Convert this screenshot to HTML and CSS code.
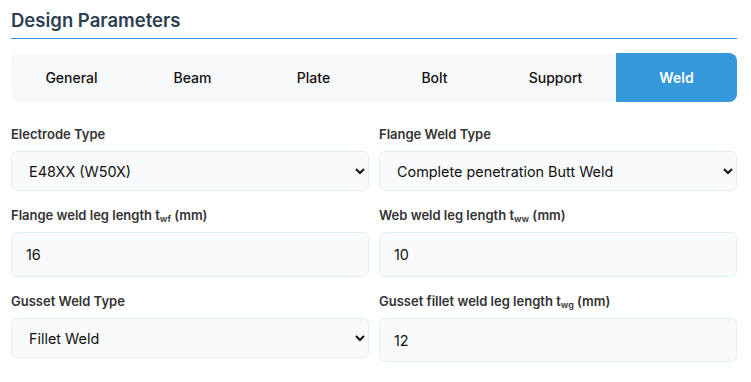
FILE: index.html
```html
<!DOCTYPE html>
<html lang="en">
<head>
    <meta charset="UTF-8">
    <meta name="viewport" content="width=device-width, initial-scale=1.0">
    <title>Design Parameters</title>
    <link rel="stylesheet" href="styles.css">
</head>
<body>
    <div class="container">
        <h2 class="section-title">Design Parameters</h2>

        <div class="tabs">
            <div class="tab">General</div>
            <div class="tab">Beam</div>
            <div class="tab">Plate</div>
            <div class="tab">Bolt</div>
            <div class="tab">Support</div>
            <div class="tab active">Weld</div>
        </div>

        <div class="form-grid">
            <div class="form-group">
                <label for="electrode">Electrode Type</label>
                <select id="electrode">
                    <option>E48XX (W50X)</option>
                    <option>E55XX (W55X)</option>
                </select>
            </div>
            <div class="form-group">
                <label for="flange-type">Flange Weld Type</label>
                <select id="flange-type">
                    <option>Complete penetration Butt Weld</option>
                    <option>Fillet Weld</option>
                </select>
            </div>
            <div class="form-group">
                <label for="twf">Flange weld leg length t<sub>wf</sub> (mm)</label>
                <input type="text" id="twf" value="16">
            </div>
            <div class="form-group">
                <label for="tww">Web weld leg length t<sub>ww</sub> (mm)</label>
                <input type="text" id="tww" value="10">
            </div>
            <div class="form-group">
                <label for="gusset-type">Gusset Weld Type</label>
                <select id="gusset-type">
                    <option>Fillet Weld</option>
                    <option>Complete penetration Butt Weld</option>
                </select>
            </div>
            <div class="form-group">
                <label for="twg">Gusset fillet weld leg length t<sub>wg</sub> (mm)</label>
                <input type="text" id="twg" value="12" class="tall">
            </div>
        </div>
    </div>
</body>
</html>
```

FILE: styles.css
```css
body {
    margin: 0;
    font-family: Inter, "Noto Sans", sans-serif;
    background: #fff;
    color: #111;
}
.container {
    width: 726px;
    padding: 8px 0 0 11px;
}
.section-title {
    margin: 0;
    font-size: 18.5px;
    line-height: 24px;
    font-weight: 600;
    color: #2c3e50;
    padding-bottom: 6px;
    border-bottom: 1px solid #3498db;
}
.tabs {
    display: flex;
    margin-top: 14px;
    height: 49px;
    background-color: #f7f8fa;
    border-radius: 8px;
    overflow: hidden;
}
.tab {
    flex: 1;
    display: flex;
    align-items: center;
    justify-content: center;
    font-size: 14px;
    font-weight: 500;
    color: #111;
    cursor: pointer;
}
.tab.active {
    background-color: #3498db;
    color: #fff;
    font-weight: 600;
}
.form-grid {
    display: grid;
    grid-template-columns: 1fr 1fr;
    column-gap: 10px;
    row-gap: 14px;
    margin-top: 22px;
}
.form-group label {
    display: block;
    font-size: 13px;
    line-height: 20px;
    font-weight: 600;
    color: #333;
    margin-bottom: 7px;
}
.form-group sub {
    font-size: 9px;
    line-height: 0;
    vertical-align: -2px;
}
select,
input {
    display: block;
    width: 100%;
    box-sizing: border-box;
    font-family: Inter, "Noto Sans", sans-serif;
    font-size: 14.4px;
    color: #111;
    background-color: #f8fafb;
    border: 1px solid #e2eef5;
    border-radius: 6px;
    outline: none;
}
select {
    height: 40px;
    padding: 0 10px 0 13px;
}
input {
    height: 45px;
    padding: 0 14px;
}
input.tall {
    height: 44px;
}
```
